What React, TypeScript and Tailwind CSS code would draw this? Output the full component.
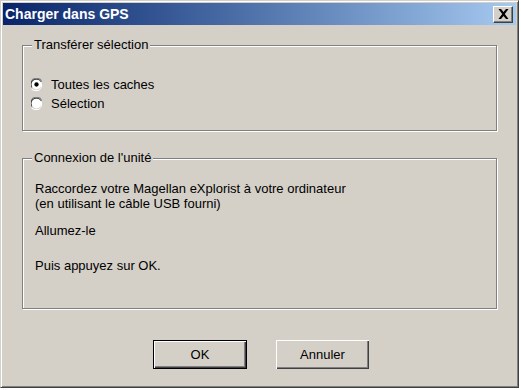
import React from "react";

function Radio({ checked }: { checked?: boolean }) {
  return (
    <svg width="13" height="13" viewBox="0 0 12 12" className="shrink-0">
      <path d="M4 0h4l2 1l1 2v1h-1v-1l-2-2h-4l-2 2v6h-1v-6l1-2z" fill="#808080" />
      <path d="M4 1h4l2 2v1h-1l-1-2h-4l-2 2v4h-1v-5z" fill="#404040" />
      <circle cx="6" cy="6" r="4.5" fill="#fff" />
      <path d="M11 4v4l-1 2l-2 2h-4l-2-1l-1-1h1l2 1h4l2-2v-5z" fill="#fff" />
      {checked && <circle cx="6" cy="6" r="2" fill="#000" />}
    </svg>
  );
}

function Group({ label, className, children }: { label: string; className: string; children: React.ReactNode }) {
  return (
    <div className={"relative border border-[#808080] shadow-[1px_1px_0_#fff,inset_1px_1px_0_#fff] " + className}>
      <span className="absolute left-[9px] top-[-9px] bg-[#d4d0c8] px-[2px] leading-[16px]">{label}</span>
      {children}
    </div>
  );
}

export default function App() {
  return (
    <div className="w-[521px] h-[390px] bg-white" style={{ fontFamily: '"Liberation Sans", Arial, sans-serif' }}>
      <div className="w-[519px] h-[388px] bg-[#d4d0c8] border border-t-[#d4d0c8] border-l-[#d4d0c8] border-r-[#404040] border-b-[#404040] shadow-[inset_1px_1px_0_#fff,inset_-1px_-1px_0_#808080] p-[2px] flex flex-col text-[13px] text-black">
        <div className="h-[22px] flex items-center justify-between pl-[2px] pr-[3px] bg-gradient-to-r from-[#0a246a] to-[#a6caf0]">
          <span className="text-white font-bold text-[14px] leading-none">Charger dans GPS</span>
          <div className="w-[20px] h-[17px] bg-[#d4d0c8] border border-t-white border-l-white border-r-[#404040] border-b-[#404040] shadow-[inset_-1px_-1px_0_#808080] flex items-center justify-center">
            <svg width="11" height="10" viewBox="0 0 11 10">
              <path d="M0.5 0h2.5l2.5 3l2.5-3h2.5l-3.7 5l3.7 5h-2.5l-2.5-3l-2.5 3h-2.5l3.7-5z" fill="#000" />
            </svg>
          </div>
        </div>
        <div className="flex-1 flex flex-col px-[19px] pt-[20px]">
          <Group label="Transférer sélection" className="h-[86px] pt-[31px] pl-[7px]">
            <div className="flex flex-col gap-[4px]">
              <label className="flex items-center gap-[8px] leading-[15px]"><Radio checked />Toutes les caches</label>
              <label className="flex items-center gap-[8px] leading-[15px]"><Radio />Sélection</label>
            </div>
          </Group>
          <Group label="Connexion de l'unité" className="mt-[27px] h-[151px] pt-[22px] pl-[12px] leading-[15px]">
            <p>Raccordez votre Magellan eXplorist à votre ordinateur</p>
            <p>(en utilisant le câble USB fourni)</p>
            <p className="mt-[12px]">Allumez-le</p>
            <p className="mt-[20px]">Puis appuyez sur OK.</p>
          </Group>
          <div className="flex gap-[29px] mt-[31px] ml-[131px]">
            <button className="w-[94px] h-[29px] border border-black bg-[#d4d0c8] shadow-[inset_1px_1px_0_#fff,inset_-1px_-1px_0_#404040,inset_-2px_-2px_0_#808080]">OK</button>
            <button className="w-[93px] h-[29px] bg-[#d4d0c8] shadow-[inset_1px_1px_0_#fff,inset_-1px_-1px_0_#404040,inset_-2px_-2px_0_#808080]">Annuler</button>
          </div>
        </div>
      </div>
    </div>
  );
}
